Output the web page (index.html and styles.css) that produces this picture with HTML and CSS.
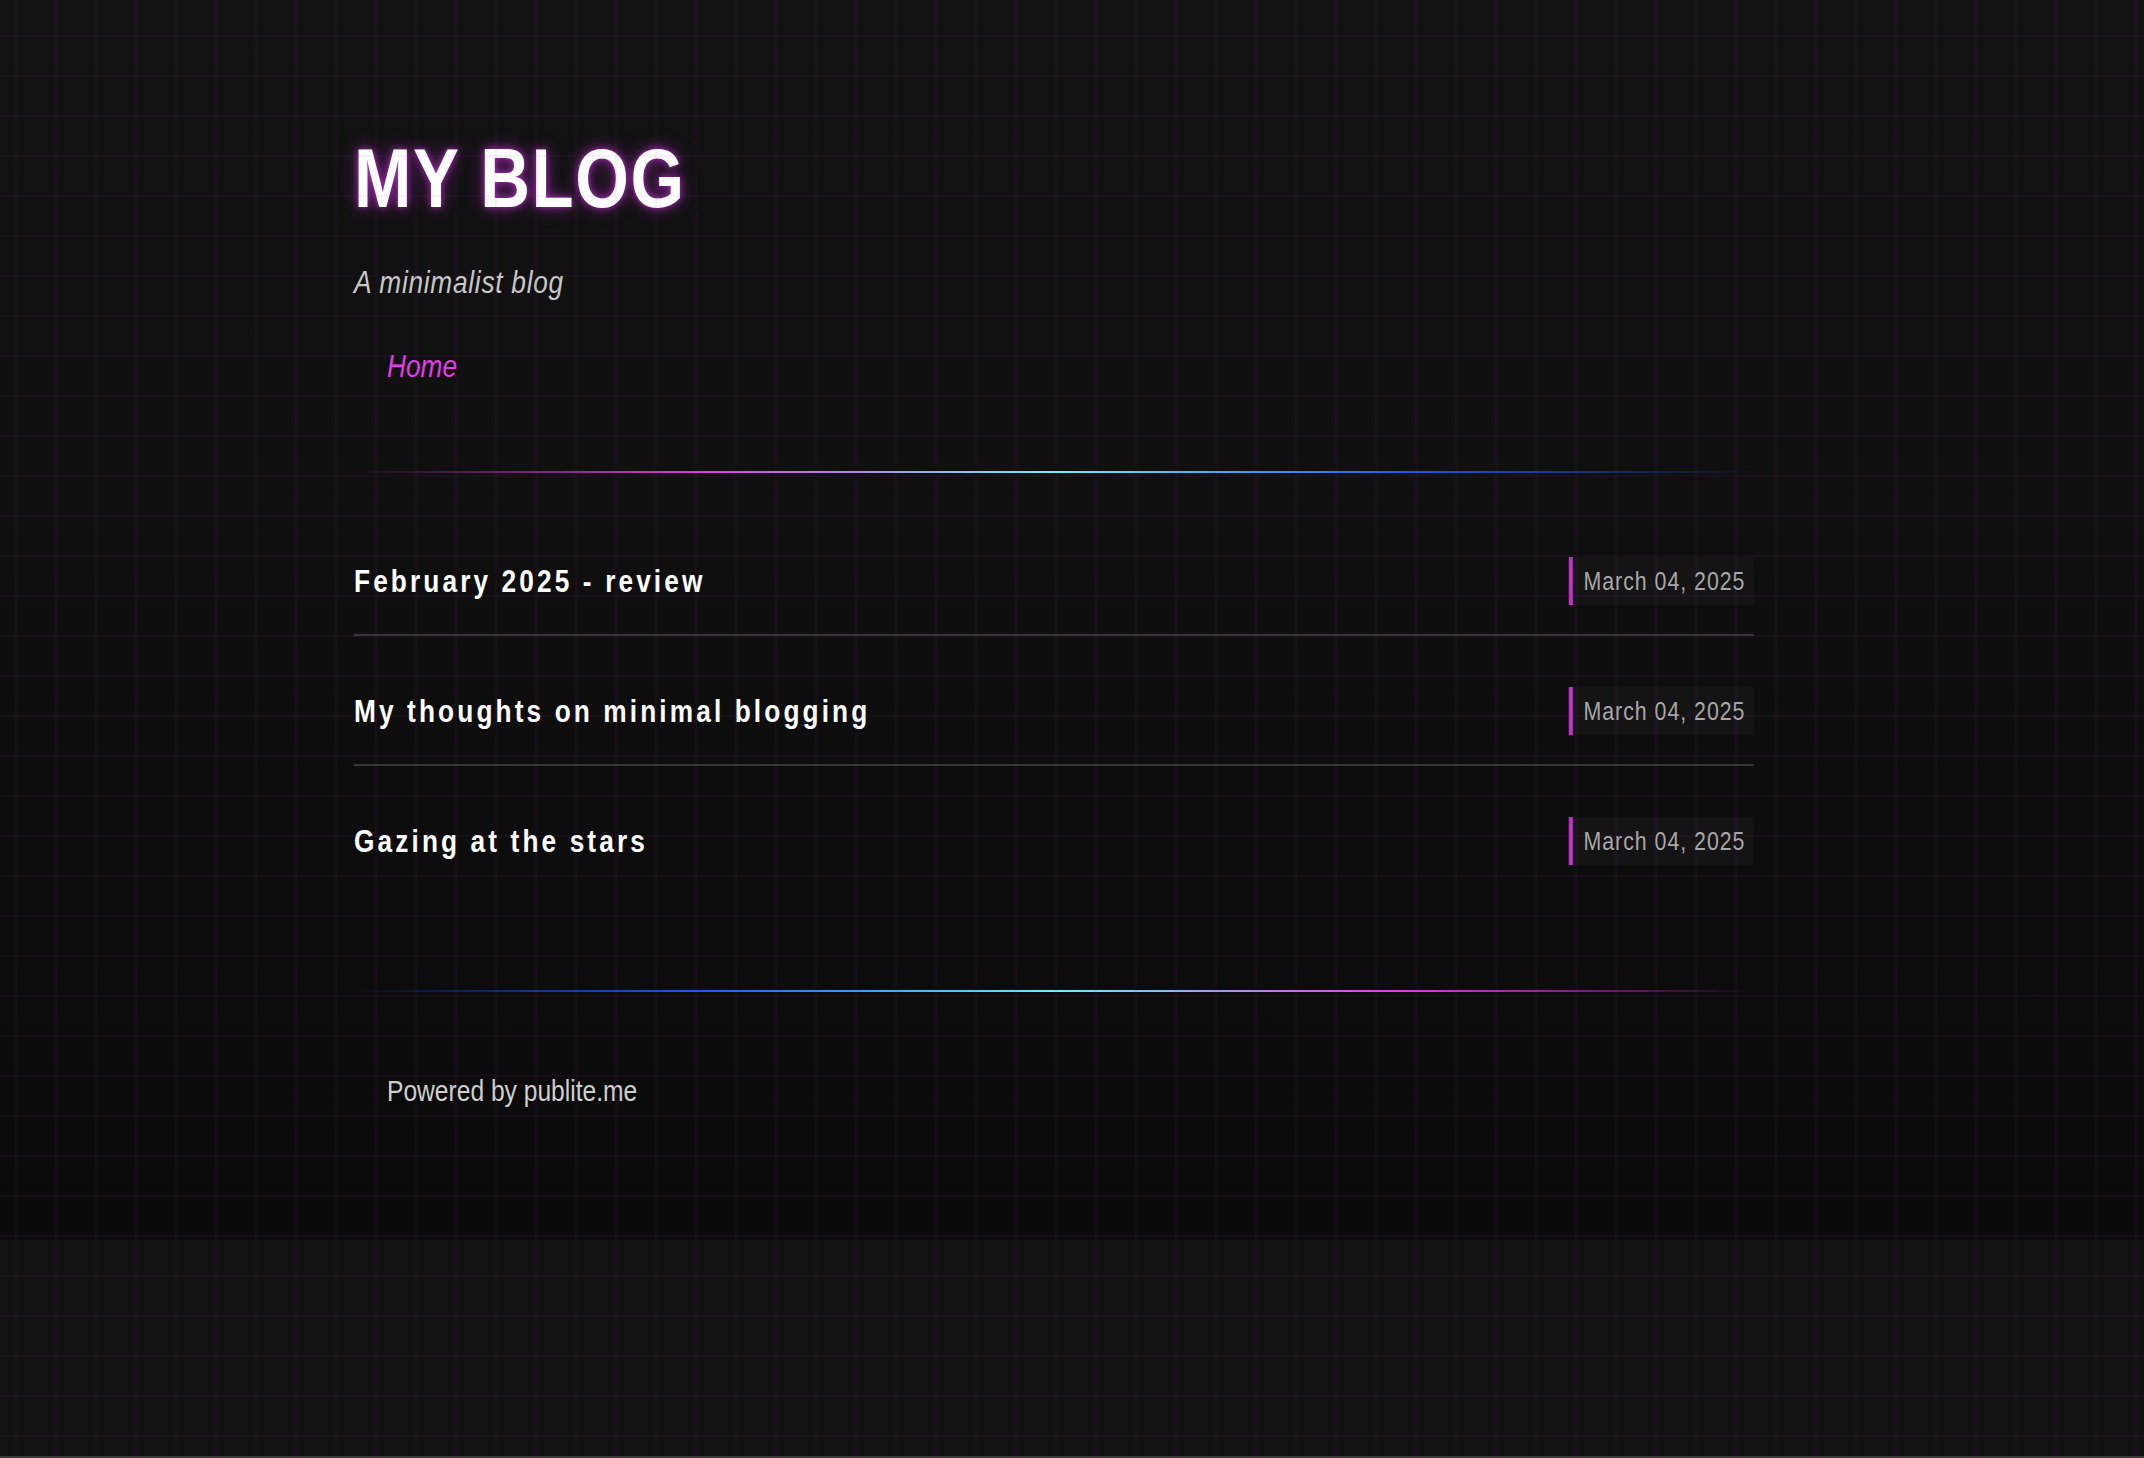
FILE: index.html
```html
<!DOCTYPE html>
<html lang="en">
<head>
<meta charset="utf-8">
<title>My Blog</title>
<link rel="stylesheet" href="styles.css">
</head>
<body>
<div class="grid-overlay"></div>
<div class="page">
  <div class="container">
    <header class="site-header">
      <h1 class="site-title narrow">MY BLOG</h1>
      <p class="tagline narrow">A minimalist blog</p>
      <nav class="nav"><a href="#" class="nav-link narrow">Home</a></nav>
    </header>
    <div class="sep"></div>
    <ul class="posts">
      <li class="post"><a href="#" class="post-title narrow">February 2025 - review</a><span class="post-date">March 04, 2025</span></li>
      <li class="post"><a href="#" class="post-title narrow">My thoughts on minimal blogging</a><span class="post-date">March 04, 2025</span></li>
      <li class="post"><a href="#" class="post-title narrow">Gazing at the stars</a><span class="post-date">March 04, 2025</span></li>
    </ul>
    <div class="sep sep-rev"></div>
    <footer class="site-footer"><p class="narrow">Powered by publite.me</p></footer>
  </div>
</div>
</body>
</html>
```
FILE: styles.css
```css
html {
  min-height: 100%;
  background: #121212;
  box-shadow: inset 0 -2px 0 #3a3a3a;
}
body {
  margin: 0;
  min-height: 100vh;
  font-family: "Liberation Sans", Arial, sans-serif;
  color: #fff;
}
/* Arial Narrow look: Liberation Sans compressed horizontally */
.narrow {
  transform: scaleX(0.82);
  transform-origin: left center;
}
.grid-overlay {
  position: fixed;
  inset: 0;
  pointer-events: none;
  background-image:
    linear-gradient(to right, rgba(160, 32, 200, 0.07) 2px, transparent 2px),
    linear-gradient(to bottom, rgba(160, 32, 200, 0.07) 2px, transparent 2px);
  background-size: 40px 40px;
  background-position: 15px 35px;
  z-index: 5;
}
.page {
  background: linear-gradient(to bottom, #131313, #0a0a0a);
  padding: 136px 0 131px;
}
.container {
  width: 1400px;
  margin-left: 354px;
}
.site-title {
  margin: 0;
  font-size: 84px;
  line-height: 84px;
  font-weight: 700;
  letter-spacing: 2px;
  color: #fff;
  text-shadow: 0 0 8px rgba(210, 60, 220, 0.75), 0 0 20px rgba(180, 40, 200, 0.55);
}
.tagline {
  margin: 43px 0 0;
  font-size: 32px;
  line-height: 38px;
  font-style: italic;
  letter-spacing: 0.9px;
  color: #c8c8c8;
}
.nav {
  margin-top: 46px;
  padding-left: 33px;
}
.nav-link {
  display: inline-block;
  font-size: 32px;
  line-height: 38px;
  font-style: italic;
  color: #e23ce6;
  text-decoration: none;
}
.sep {
  height: 2px;
  margin-top: 86px;
  background: linear-gradient(to right, rgba(224, 64, 224, 0) 0%, #e03ce0 25%, #6ef0f0 50%, #2058f0 75%, rgba(32, 88, 240, 0) 100%);
}
.sep-rev {
  margin-top: 96px;
  background: linear-gradient(to right, rgba(32, 88, 240, 0) 0%, #2058f0 25%, #6ef0f0 50%, #e03ce0 75%, rgba(224, 64, 224, 0) 100%);
}
.posts {
  list-style: none;
  margin: 56px 0 0;
  padding: 0;
}
.post {
  display: flex;
  align-items: center;
  justify-content: space-between;
  padding: 28px 0 29px;
  border-bottom: 2px solid #363636;
  margin-bottom: 23px;
}
.post:last-child {
  border-bottom: none;
  margin-bottom: 0;
}
.post-title {
  font-size: 32px;
  line-height: 38px;
  font-weight: 700;
  letter-spacing: 3.8px;
  color: #fff;
  text-decoration: none;
}
.post-date {
  display: block;
  font-size: 26px;
  line-height: 32px;
  letter-spacing: 1.2px;
  color: #a8a8a8;
  background: #141414;
  border-left: 5px solid #c22fc9;
  padding: 8px 11px 8px 13px;
  transform: scaleX(0.82);
  transform-origin: right center;
}
.site-footer {
  margin-top: 81px;
  padding-left: 33px;
}
.site-footer p {
  margin: 0;
  font-size: 30px;
  line-height: 36px;
  color: #cfcfcf;
}
```
